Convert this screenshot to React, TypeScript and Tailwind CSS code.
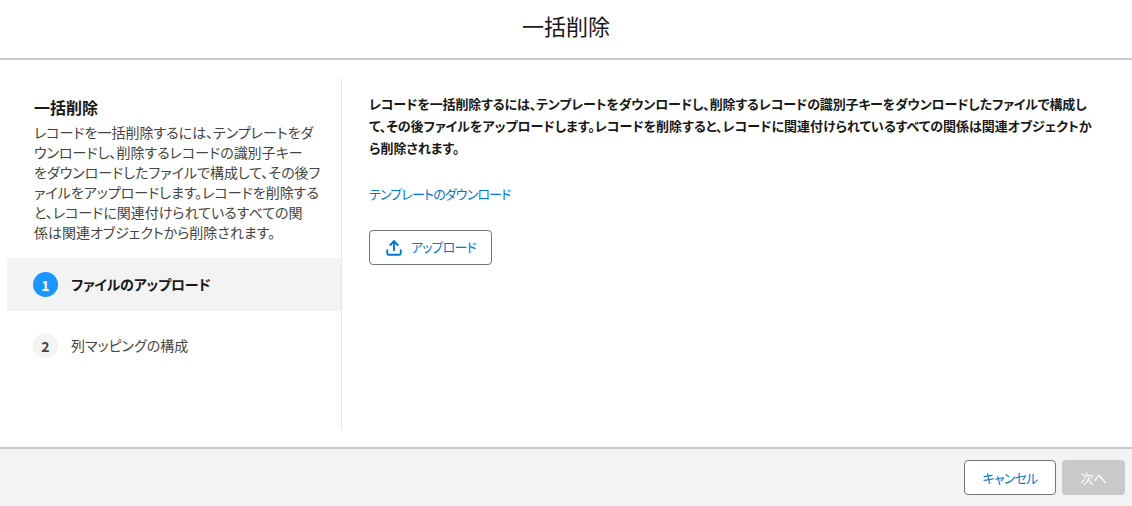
import React from 'react';
import { Upload } from 'lucide-react';

const font = { fontFamily: '"Noto Sans CJK JP", "Noto Sans", sans-serif', fontFeatureSettings: '"palt"' };

const sideLines = [
  'レコードを一括削除するには、テンプレートをダ',
  'ウンロードし、削除するレコードの識別子キー',
  'をダウンロードしたファイルで構成して、その後フ',
  'ァイルをアップロードします。レコードを削除する',
  'と、レコードに関連付けられているすべての関',
  '係は関連オブジェクトから削除されます。',
];

export default function App() {
  return (
    <div className="flex flex-col h-[506px] w-[1132px] bg-white overflow-hidden" style={font}>
      {/* Header */}
      <header className="h-[60px] shrink-0 flex items-center justify-center border-b-2 border-[#c9c9c9] pb-2">
        <h1 className="text-[22px] font-normal text-[#181818]">一括削除</h1>
      </header>

      {/* Body */}
      <div className="h-[387px] shrink-0 flex pt-[18px] pb-[17px] pl-[7px]">
        <aside className="w-[335px] shrink-0 border-r border-[#e5e5e5]">
          <div className="pl-[27px] pt-[18px]">
            <h2 className="text-base font-bold leading-[22px] mb-1 text-[#181818]">一括削除</h2>
            <div className="text-sm leading-5 text-[#444444] whitespace-nowrap">
              {sideLines.map((line) => (
                <div key={line}>{line}</div>
              ))}
            </div>
          </div>
          <div className="mt-4 h-[53px] bg-[#f3f3f3] flex items-center gap-[13px] pl-[26px]">
            <span className="w-[25px] h-[25px] rounded-full bg-[#1b96ff] text-white text-sm font-bold flex items-center justify-center">1</span>
            <span className="text-sm font-bold text-[#181818] tracking-[-0.2px] pb-0.5">ファイルのアップロード</span>
          </div>
          <div className="mt-2 h-[53px] flex items-center gap-[13px] pl-[26px]">
            <span className="w-[25px] h-[25px] rounded-full bg-[#f3f3f3] text-[#444444] text-sm font-bold flex items-center justify-center">2</span>
            <span className="text-sm text-[#444444] pb-0.5">列マッピングの構成</span>
          </div>
        </aside>

        <main className="flex-1 pl-[27px] pt-[15px]">
          <div className="text-[13px] font-bold leading-[22px] text-[#181818] whitespace-nowrap">
            <div className="tracking-[-0.13px]">レコードを一括削除するには、テンプレートをダウンロードし、削除するレコードの識別子キーをダウンロードしたファイルで構成し</div>
            <div>て、その後ファイルをアップロードします。レコードを削除すると、レコードに関連付けられているすべての関係は関連オブジェクトか</div>
            <div>ら削除されます。</div>
          </div>
          <a className="block mt-[24px] text-[13px] tracking-[-0.85px] leading-[22px] text-[#0176d3]">テンプレートのダウンロード</a>
          <button className="mt-[25px] w-[123px] h-[35px] rounded border border-[#747474] bg-white flex items-center justify-center gap-2 text-[13px] tracking-[-0.8px] text-[#0176d3]">
            <Upload className="w-[18px] h-[18px]" strokeWidth={2.5} />
            <span className="pb-0.5">アップロード</span>
          </button>
        </main>
      </div>

      {/* Footer */}
      <footer className="flex-1 bg-[#f3f3f3] border-t-2 border-[#c9c9c9] flex items-center justify-end gap-[6px] pr-[7px]">
        <button className="w-[92px] h-[35px] rounded border border-[#747474] bg-white text-[13px] tracking-[-0.8px] text-[#0176d3]">キャンセル</button>
        <button className="w-[63px] h-[35px] rounded bg-[#c9c9c9] text-[13px] text-white">次へ</button>
      </footer>
    </div>
  );
}
